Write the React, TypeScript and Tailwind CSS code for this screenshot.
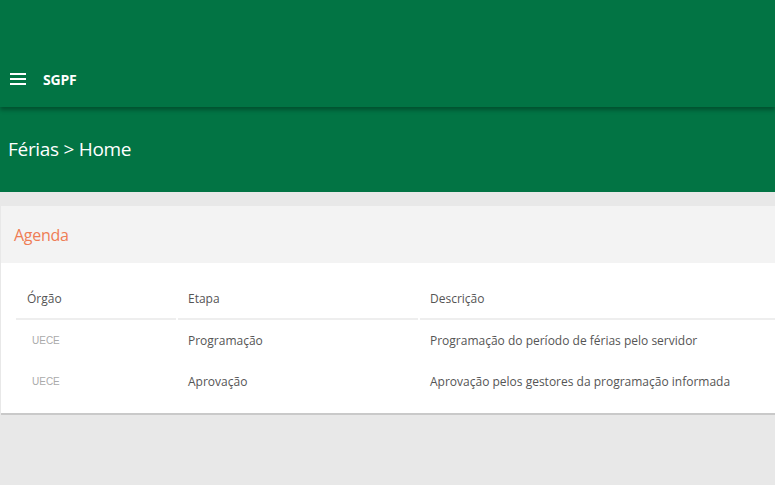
import React from "react";

export default function App() {
  const rows = [
    { o: "UECE", e: "Programação", d: "Programação do período de férias pelo servidor" },
    { o: "UECE", e: "Aprovação", d: "Aprovação pelos gestores da programação informada" },
  ];
  return (
    <div className="w-[775px] h-[485px] overflow-hidden bg-[#e8e8e8] font-['Open_Sans',sans-serif]">
      <div className="relative z-10 bg-[#027444] pt-[51px] shadow-[0_3px_4px_rgba(0,0,0,0.3)]">
        <div className="h-[56px] flex items-center pl-[10px]">
          <svg width="16" height="12" viewBox="0 0 16 12" className="mt-[-1px]">
            <rect x="0" y="0" width="16" height="2" fill="#fff" />
            <rect x="0" y="5" width="16" height="2" fill="#fff" />
            <rect x="0" y="10" width="16" height="2" fill="#fff" />
          </svg>
          <span className="ml-[17px] text-white font-bold text-[14px] tracking-[-0.2px]">SGPF</span>
        </div>
      </div>
      <div className="h-[85px] bg-[#027444] flex items-center pl-[8px]">
        <span className="text-white text-[19px] tracking-[-0.3px]">Férias &gt; Home</span>
      </div>
      <div className="pt-[14px]">
        <div className="ml-px bg-white border-b-2 border-[#c9c9c9]">
          <div className="h-[57px] bg-[#f3f3f3] flex items-center pl-[13px]">
            <span className="text-[#ef7d55] text-[16px] tracking-[-0.3px]">Agenda</span>
          </div>
          <div className="pt-[16px] pb-[11px] pl-[15px]">
            <div className="grid grid-cols-[160px_240px_1fr] gap-x-[2px]">
              <div className="h-[41px] flex items-center pl-[11px] border-b-2 border-[#eeeeee] text-[12px] text-[#555]">Órgão</div>
              <div className="h-[41px] flex items-center pl-[10px] border-b-2 border-[#eeeeee] text-[12px] text-[#555]">Etapa</div>
              <div className="h-[41px] flex items-center pl-[10px] border-b-2 border-[#eeeeee] text-[12px] text-[#555]">Descrição</div>
              {rows.map((r, i) => (
                <React.Fragment key={i}>
                  <div className="h-[41px] flex items-center pl-[16px] text-[10px] text-[#aaa] font-['Liberation_Sans',sans-serif]">{r.o}</div>
                  <div className="h-[41px] flex items-center pl-[10px] text-[12px] text-[#555]">{r.e}</div>
                  <div className="h-[41px] flex items-center pl-[10px] text-[12px] text-[#555]">{r.d}</div>
                </React.Fragment>
              ))}
            </div>
          </div>
        </div>
      </div>
    </div>
  );
}
